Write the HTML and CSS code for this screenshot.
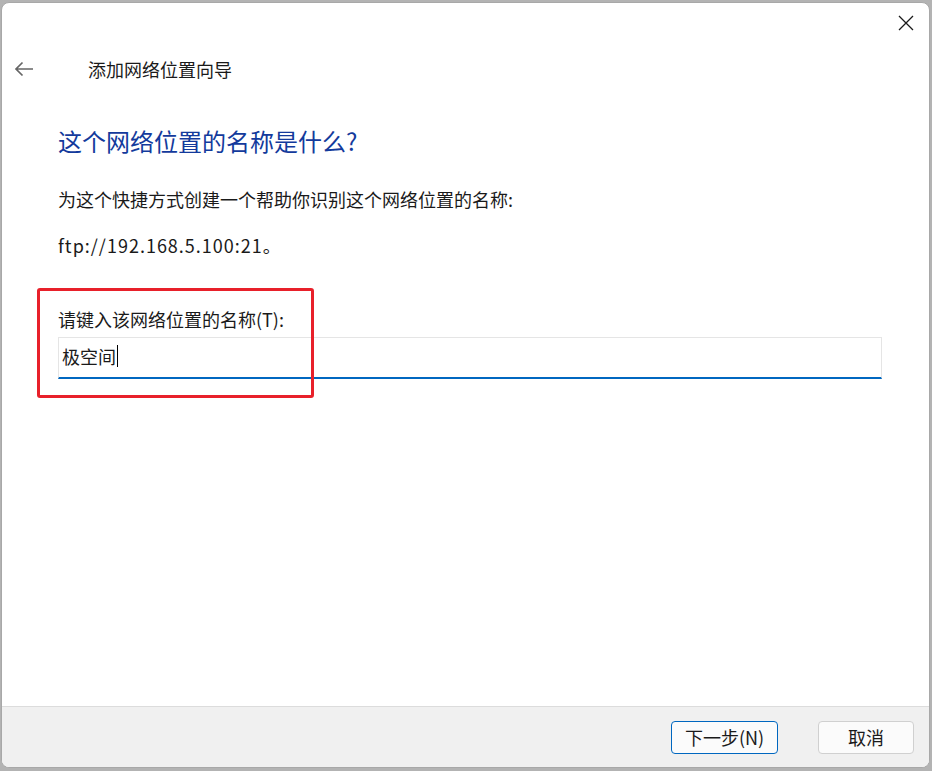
FILE: index.html
```html
<!DOCTYPE html>
<html lang="zh-CN">
<head>
<meta charset="utf-8">
<title>添加网络位置向导</title>
<link rel="stylesheet" href="styles.css">
</head>
<body>
<div class="backdrop">
  <div class="window">
    <div class="titlebar">
      <button class="close" aria-label="关闭">
        <svg width="16" height="16" viewBox="0 0 16 16"><path d="M1 1 L15 15 M15 1 L1 15" stroke="#1a1a1a" stroke-width="1.3" fill="none"/></svg>
      </button>
    </div>
    <div class="header">
      <span class="back">
        <svg width="20" height="16" viewBox="0 0 20 16"><path d="M19 8 H2 M8.5 1.5 L2 8 L8.5 14.5" stroke="#666666" stroke-width="1.7" fill="none"/></svg>
      </span>
      <span class="wizard-title">添加网络位置向导</span>
    </div>
    <div class="main">
      <h1 class="heading">这个网络位置的名称是什么?</h1>
      <p class="desc">为这个快捷方式创建一个帮助你识别这个网络位置的名称:</p>
      <p class="addr">ftp://192.168.5.100:21。</p>
      <div class="field">
        <label class="label">请键入该网络位置的名称(T):</label>
        <div class="input"><span class="value">极空间</span><span class="caret"></span></div>
        <div class="highlight"></div>
      </div>
    </div>
    <div class="footer">
      <button class="btn primary">下一步(N)</button>
      <button class="btn">取消</button>
    </div>
  </div>
</div>
</body>
</html>
```
FILE: styles.css
```css
html, body {
  margin: 0;
  padding: 0;
}
body {
  width: 932px;
  height: 771px;
  background: #b3b3b3;
  font-family: "Noto Sans CJK SC", "Noto Sans", sans-serif;
  color: #1a1a1a;
  overflow: hidden;
}
.backdrop {
  padding: 2px 2px 3px 1px;
}
.window {
  width: 927px;
  height: 764px;
  background: #ffffff;
  border: 1px solid #a8a8a8;
  border-radius: 8px;
  overflow: hidden;
  display: flex;
  flex-direction: column;
}
.titlebar {
  height: 40px;
  display: flex;
  justify-content: flex-end;
  align-items: center;
  padding-right: 5px;
}
.close {
  border: 0;
  background: transparent;
  width: 36px;
  height: 36px;
  display: flex;
  align-items: center;
  justify-content: center;
  padding: 0;
}
.header {
  height: 52px;
  display: flex;
  align-items: center;
}
.back {
  width: 20px;
  height: 16px;
  margin-left: 12px;
  display: flex;
}
.wizard-title {
  margin-left: 54px;
  font-size: 18px;
  line-height: 24px;
}
.main {
  flex: 1;
  padding: 0 50px 0 56px;
  display: flex;
  flex-direction: column;
}
.heading {
  margin: 31px 0 0 0;
  font-size: 24px;
  line-height: 30px;
  font-weight: normal;
  color: #133a9c;
}
.desc {
  margin: 31px 0 0 0;
  font-size: 18px;
  line-height: 24px;
}
.addr {
  margin: 22px 0 0 0;
  font-size: 18px;
  line-height: 24px;
  letter-spacing: 1px;
}
.field {
  position: relative;
  margin-top: 50px;
}
.label {
  display: block;
  font-size: 18px;
  line-height: 24px;
}
.input {
  margin-top: 6px;
  height: 35px;
  padding-bottom: 4px;
  border: 1px solid #e5e5e5;
  border-bottom: 2px solid #0067c0;
  display: flex;
  align-items: center;
  padding-left: 3px;
  width: 819px;
  box-sizing: content-box;
}
.value {
  font-size: 18px;
  line-height: 24px;
}
.caret {
  width: 1px;
  height: 22px;
  background: #000;
  margin-left: 1px;
}
.highlight {
  position: absolute;
  left: -21px;
  top: -19px;
  width: 271px;
  height: 104px;
  border: 3px solid #e8202a;
  border-radius: 3px;
}
.footer {
  height: 60px;
  background: #f0f0f0;
  border-top: 1px solid #dcdcdc;
  display: flex;
  justify-content: flex-end;
  align-items: center;
  gap: 40px;
  padding-right: 15px;
}
.btn {
  font-family: "Noto Sans CJK SC", "Noto Sans", sans-serif;
  font-size: 18px;
  line-height: 22px;
  height: 33px;
  width: 96px;
  background: #fbfbfb;
  border: 1px solid #d0d0d0;
  border-radius: 4px;
  color: #1a1a1a;
  padding: 0;
}
.btn.primary {
  width: 107px;
  border-color: #0067c0;
}
```
